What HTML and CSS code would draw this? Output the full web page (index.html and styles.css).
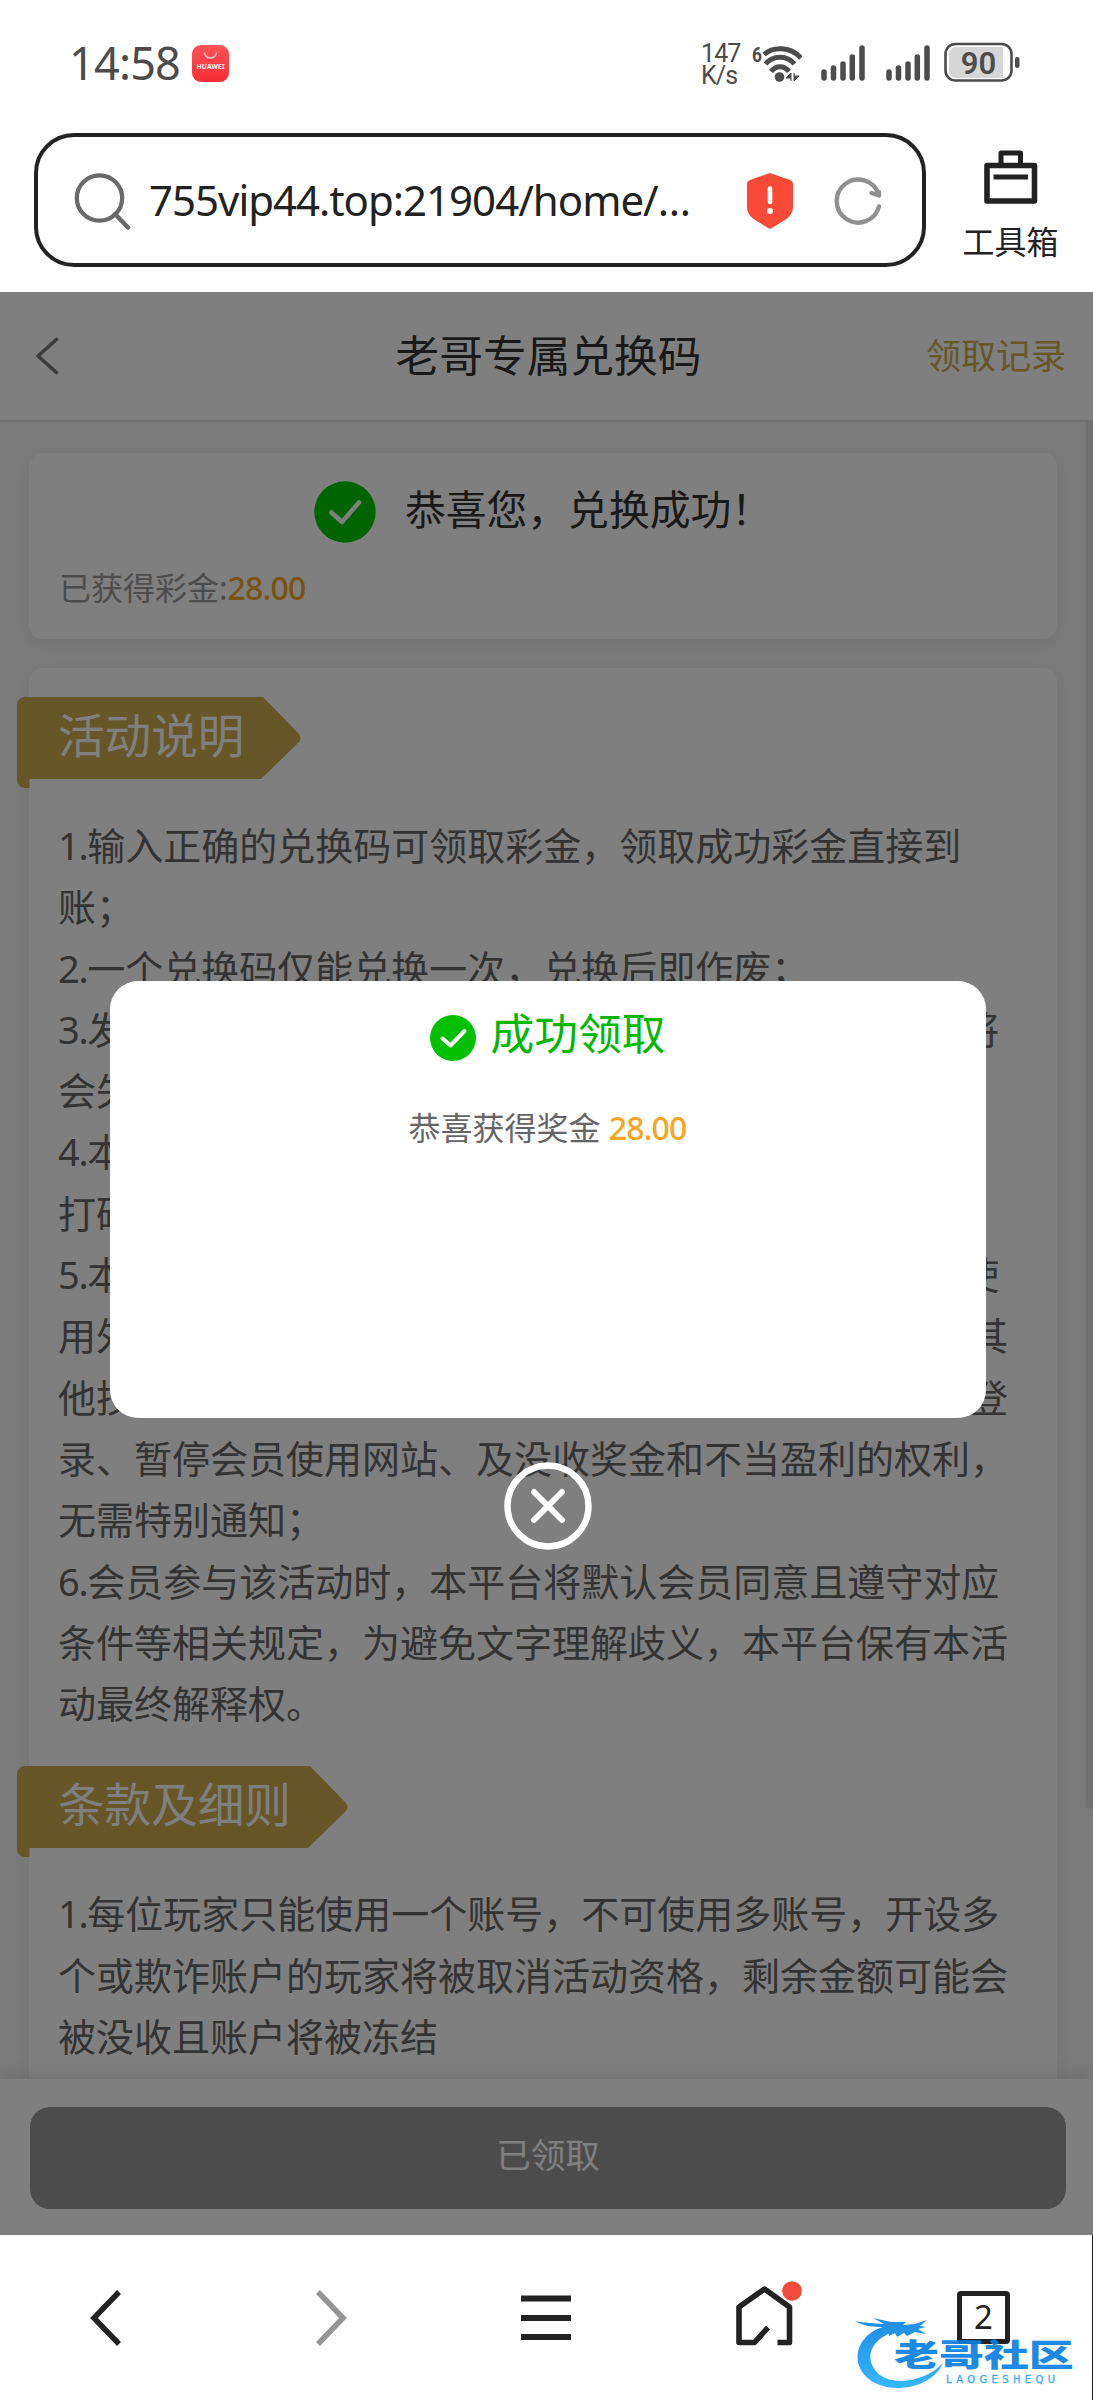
FILE: index.html
```
<!DOCTYPE html>
<html lang="zh-CN">
<head>
<meta charset="utf-8">
<title>老哥专属兑换码</title>
<link rel="stylesheet" href="styles.css">
</head>
<body>
<div class="phone">
  <div class="status">
    <span class="clock">14:58</span>
    <svg class="app" width="37" height="37" viewBox="0 0 37 37"><defs><linearGradient id="hw" x2="0" y2="1"><stop offset="0" stop-color="#ff5357"/><stop offset="1" stop-color="#f92c35"/></linearGradient></defs><rect width="37" height="37" rx="9" fill="url(#hw)"/><path d="M12.5 7.5a6 5.5 0 0 0 12 0" fill="none" stroke="#ffc9c9" stroke-width="1.4"/><text x="18.5" y="24" text-anchor="middle" textLength="28" class="app-name">HUAWEI</text></svg>
    <span class="speed"><span>147</span><span>K/s</span></span>
    <svg class="wifi" width="50" height="38" viewBox="0 0 50 38"><text x="0" y="18" class="wifi-gen" textLength="10" lengthAdjust="spacingAndGlyphs">6</text><g fill="none" stroke="#4c4c4c" stroke-width="5"><path d="M12 10.500C21 2.500 38 2 49 14" /><path d="M13.500 20C21 11 35 11 42.500 20"/><path d="M19 27.500C24 21 32 21 37 27.500"/></g><circle cx="27.500" cy="33" r="4.800" fill="#4c4c4c"/><path d="M39 37V29L34 34h4M42 29v8l5-5h-4" fill="#4c4c4c" stroke="#4c4c4c" stroke-width="1"/></svg>
    <svg class="signal" width="44" height="36" viewBox="0 0 44 36"><path d="M3 27v6M12.500 23v10M22 19v14M31.300 12v21M41 3v30" stroke="#4c4c4c" stroke-width="5.500" stroke-linecap="round"/></svg>
    <svg class="signal second" width="44" height="36" viewBox="0 0 44 36"><path d="M3 27v6M12.500 23v10M22 19v14M31.300 12v21M41 3v30" stroke="#4c4c4c" stroke-width="5.500" stroke-linecap="round"/></svg>
    <svg class="battery" width="76" height="40" viewBox="0 0 76 40"><rect x="1.500" y="2" width="66" height="36.500" rx="10" fill="#fff" stroke="#4c4c4c" stroke-width="2.600"/><path d="M12 5H59V36H12a7 7 0 0 1-7-7V12a7 7 0 0 1 7-7Z" fill="#d6d6d6"/><rect x="71" y="15" width="4.500" height="11" rx="2" fill="#4c4c4c"/><text x="34.500" y="31.500" text-anchor="middle" class="level">90</text></svg>
  </div>

  <div class="toolbar">
    <div class="address">
      <svg class="search" width="58" height="60" viewBox="0 0 58 60"><circle cx="26.500" cy="27" r="22.700" fill="none" stroke="#6a6a6a" stroke-width="4.300"/><path d="M42 43 55 56.500" stroke="#6a6a6a" stroke-width="4.500" stroke-linecap="round"/></svg>
      <span class="url">755vip44.top:21904/home/…</span>
      <svg class="shield" width="48" height="58" viewBox="0 0 48 58"><path d="M24 1 44 8q3 1 3 4V35q0 7-6 11.500Q36 50 24 57 12 50 7 46.500 1 42 1 35V12q0-3 3-4Z" fill="#f84a37"/><path d="M24 16.500V30" stroke="#fff" stroke-width="4.600" stroke-linecap="round"/><circle cx="24" cy="39" r="3" fill="#fff"/></svg>
      <svg class="reload" width="52" height="52" viewBox="0 0 52 52"><g fill="none" stroke="#909090" stroke-width="4.400" stroke-linecap="round" stroke-linejoin="round"><path d="M47 31.500A21.500 21.500 0 1 1 46.500 19"/><path d="M39.500 18 47 20.500V17"/></g></svg>
    </div>
    <div class="tools">
      <svg width="54" height="54" viewBox="0 0 54 54"><g fill="none" stroke="#222" stroke-linejoin="round"><rect x="3" y="15.500" width="47.500" height="35.500" stroke-width="5.600"/><path d="M17 15V3H36.500V15" stroke-width="5"/><path d="M9.500 27H44" stroke-width="5"/></g></svg>
      <span>工具箱</span>
    </div>
  </div>

  <div class="webview">
    <header class="head">
      <svg width="26" height="38" viewBox="0 0 26 38"><path d="M22.500 2.500 4 19 22.500 35.500" fill="none" stroke="#777" stroke-width="3.600" stroke-linecap="round" stroke-linejoin="round"/></svg>
      <h1>老哥专属兑换码</h1>
      <a>领取记录</a>
    </header>
    <main class="content">
      <section class="card result">
        <div class="result-title">
          <svg width="62" height="62" viewBox="0 0 62 62"><circle cx="31" cy="31" r="30.700" fill="#00ca00"/><path d="M17.500 31.500 28 41 45 21.500" fill="none" stroke="#fff" stroke-width="4.500" stroke-linecap="round" stroke-linejoin="round"/></svg>
          <span>恭喜您，兑换成功！</span>
        </div>
        <p>已获得彩金:<b class="amount">28.00</b></p>
      </section>
      <section class="card rules">
        <h2 class="ribbon"><svg class="flag" width="284" height="91" viewBox="0 0 284 91"><path d="M8 0H246L282 37q3 4 0 8L244 82H12.500V91H8a8 8 0 0 1-8-8V8A8 8 0 0 1 8 0Z" fill="#ceac50"/></svg><span>活动说明</span></h2>
        <p class="copy"><i>1.</i>输入正确的兑换码可领取彩金，领取成功彩金直接到<br>账；<br><i>2.</i>一个兑换码仅能兑换一次，兑换后即作废；<br><i>3.</i>发布的兑换码请在有效时间内尽快兑换使用，逾期后将<br>会失去兑换资格；<br><i>4.</i>本活动所获得的彩金需完成相应流水，方可申请提款、<br>打码要求以平台公布为准；<br><i>5.</i>本活动仅限真实会员参与，如本平台发现有任何会员使<br>用外挂程序、机器人、恶意套利、多账号操作以及借助其<br>他技术手段的违规行为，本平台保留无需说明即时拒绝登<br>录、暂停会员使用网站、及没收奖金和不当盈利的权利，<br>无需特别通知；<br><i>6.</i>会员参与该活动时，本平台将默认会员同意且遵守对应<br>条件等相关规定，为避免文字理解歧义，本平台保有本活<br>动最终解释权。</p>
        <h2 class="ribbon terms"><svg class="flag" width="331" height="91" viewBox="0 0 331 91"><path d="M8 0H293L329 37q3 4 0 8L291 82H12.500V91H8a8 8 0 0 1-8-8V8A8 8 0 0 1 8 0Z" fill="#ceac50"/></svg><span>条款及细则</span></h2>
        <p class="copy"><i>1.</i>每位玩家只能使用一个账号，不可使用多账号，开设多<br>个或欺诈账户的玩家将被取消活动资格，剩余金额可能会<br>被没收且账户将被冻结</p>
      </section>
      <div class="scrollbar"></div>
    </main>
    <footer class="action"><button>已领取</button></footer>

    <div class="overlay">
      <div class="modal">
        <div class="modal-title">
          <svg width="46" height="46" viewBox="0 0 46 46"><circle cx="23" cy="23" r="23" fill="#00c000"/><path d="M12.500 23.500 20.500 30.500 34.500 16" fill="none" stroke="#fff" stroke-width="4" stroke-linecap="round" stroke-linejoin="round"/></svg>
          <span>成功领取</span>
        </div>
        <p>恭喜获得奖金 <b class="amount">28.00</b></p>
      </div>
      <svg class="close" width="88" height="88" viewBox="0 0 88 88"><circle cx="44" cy="44" r="40.500" fill="none" stroke="#fff" stroke-width="6.500"/><path d="M30 30 58 58M58 30 30 58" stroke="#fff" stroke-width="6" stroke-linecap="round"/></svg>
    </div>
  </div>

  <nav class="nav">
    <svg class="n-back" width="34" height="58" viewBox="0 0 34 58"><path d="M30 3 5 29 30 55" fill="none" stroke="#222" stroke-width="5.500"/></svg>
    <svg class="n-fwd" width="34" height="58" viewBox="0 0 34 58"><path d="M4 3 29 29 4 55" fill="none" stroke="#959595" stroke-width="5.500"/></svg>
    <svg class="n-menu" width="50" height="46" viewBox="0 0 50 46"><path d="M0 3.500H50M0 23H50M0 42H50" stroke="#222" stroke-width="6"/></svg>
    <svg class="n-home" width="68" height="68" viewBox="0 0 68 68"><path d="M41.500 62.500H53.500V27L28.500 9 3 27V62.500H18.500L32 47.500" transform="translate(0 1)" fill="none" stroke="#222" stroke-width="5.600" stroke-linejoin="round"/><circle cx="56" cy="12" r="9.800" fill="#f24a3a"/></svg>
    <div class="tabs">2</div>
    <svg class="brand" width="224" height="76" viewBox="0 0 224 76">
      <defs><linearGradient id="sea" gradientUnits="userSpaceOnUse" x1="0" y1="0" x2="0" y2="76"><stop offset="0" stop-color="#0b80e0"/><stop offset="1" stop-color="#27b4ff"/></linearGradient></defs>
      <g fill="url(#sea)">
        <path d="M36 10C8 14-4 38 6 55 20 81 74 79 88 48 72 66 34 74 20 55 8 39 20 20 46 15Z"/>
        <path d="M0 6C10 8 18 8 29 9L18 3 36 7 51 7 48 10 60 9 72 5 65 11 71 12 63 14 71 19 60 17 52 21 49 18 42 22 40 18 34 21 33 16 25 18 29 12C18 12 8 11 0 6Z"/>
        <text transform="translate(39 51) scale(1.450 1)" class="brand-name">老哥社区</text>
        <text x="91" y="68" textLength="109" class="brand-latin">LAOGESHEQU</text>
      </g>
    </svg>
  </nav>
</div>
</body>
</html>
```
FILE: styles.css
```
* { box-sizing: border-box; }
body { margin: 0; background: #fff; font-family: "Noto Sans", "Noto Sans CJK SC", sans-serif; }
h1, h2, p { margin: 0; font-weight: 400; }
svg { display: block; flex: none; }
i, b { font-style: normal; font-weight: 400; }
.phone { width: 1093px; height: 2400px; display: flex; flex-direction: column; overflow: hidden; background: #fff; }

/* status bar */
.status { height: 127px; display: flex; align-items: flex-start; padding: 43px 0 0 69px; color: #4c4c4c; }
.clock { width: 123px; height: 40px; line-height: 40px; font-size: 45px; font-weight: 400; letter-spacing: -.8px; white-space: nowrap; }
.app { margin-top: 2px; }
.app-name { font: 700 6.5px "Noto Sans", sans-serif; fill: #fff; }
.speed { display: flex; flex-direction: column; width: 50px; margin-left: 472px; font: 25px/22px Roboto, sans-serif; letter-spacing: -.9px; }
.wifi { margin: 1px 0 0 1px; }
.wifi-gen { font: 700 21px Roboto, sans-serif; fill: #4c4c4c; }
.signal { margin: 2px 0 0 19px; }
.second { margin-left: 21px; }
.battery { margin: -1px 0 0 14px; }
.level { font: 600 31px Roboto, sans-serif; fill: #4c4c4c; }

/* address bar */
.toolbar { height: 165px; display: flex; padding: 6px 0 0 34px; }
.address { width: 892px; height: 134px; border: 4px solid #222; border-radius: 40px; display: flex; align-items: center; }
.search { margin: 2px 0 0 35px; }
.url { width: 597px; margin-left: 18px; font-size: 42px; line-height: 60px; letter-spacing: -1px; color: #222; white-space: nowrap; }
.shield { margin-top: 2px; }
.reload { margin: 2px 0 0 38px; }
.tools { width: 167px; padding-top: 17px; display: flex; flex-direction: column; align-items: center; }
.tools svg { margin-left: 2px; }
.tools span { margin: 12px 0 0 2px; font: 32px/48px "Noto Sans CJK SC", sans-serif; color: #222; }

/* page */
.webview { position: relative; height: 1943px; display: flex; flex-direction: column; background: #f5f5f5; overflow: hidden; }
.head { height: 130px; flex: none; display: flex; align-items: center; justify-content: space-between; padding: 0 27px 0 34px; background: #fff; border-bottom: 2px solid #dedede; font-family: "Noto Sans CJK SC", sans-serif; }
.head h1 { font-size: 43.700px; line-height: 60px; color: #333; margin-left: 111px; margin-top: -7px; }
.head a { font-size: 35px; line-height: 50px; color: #ceac50; margin-top: -5px; }
.content { position: relative; height: 1657px; flex: none; padding: 31px 36px 0 29px; display: flex; flex-direction: column; gap: 29px; overflow: hidden; }
.card { background: #fff; border-radius: 14px; box-shadow: 0 4px 18px rgba(0,0,0,.06); }
.result { height: 186px; flex: none; padding: 28px 30px 0; }
.result-title { display: flex; justify-content: center; gap: 29px; height: 62px; align-items: center; }
.result-title span { font: 40.800px/60px "Noto Sans CJK SC", sans-serif; color: #333; margin-top: -9px; white-space: nowrap; }
.result p { font-size: 32px; line-height: 48px; color: #999; margin-top: 21px; }
.amount { color: #f5a623; font-weight: 500; letter-spacing: -.8px; }
.rules { height: 1500px; flex: none; padding: 29px 0 0; }
.ribbon { display: grid; width: max-content; height: 91px; margin-left: -12px; }
.ribbon > * { grid-area: 1 / 1; }
.ribbon span { padding: 0 0 0 41px; font: 46.6px/72px "Noto Sans CJK SC", sans-serif; color: #fff; }
.copy { margin: 25px 0 0 29px; font: 38px/61.3px "Noto Sans CJK SC", sans-serif; color: #666; white-space: nowrap; }
.copy i { font-family: "Noto Sans", sans-serif; letter-spacing: -1.300px; line-height: 1; }
.terms { margin-top: 34px; }
.terms + .copy { margin-top: 24px; }
.scrollbar { position: absolute; right: 0; top: 0; width: 7px; height: 1387px; border-radius: 4px; background: #dedede; }
.action { position: relative; height: 156px; flex: none; padding: 28px 27px 0 30px; background: #fff; box-shadow: 0 -4px 16px rgba(0,0,0,.1); }
.action button { display: block; width: 100%; height: 102px; border: 0; border-radius: 20px; background: #989898; color: #fff; font: 34.600px/50px "Noto Sans CJK SC", sans-serif; padding: 0 0 10px; }

/* reward dialog */
.overlay { position: absolute; inset: 0; padding-top: 689px; display: flex; flex-direction: column; align-items: center; background: rgba(0,0,0,.5); }
.modal { width: 876px; height: 437px; flex: none; margin-left: 2px; padding-top: 34px; border-radius: 28px; background: #fff; text-align: center; }
.modal-title { display: flex; align-items: center; justify-content: center; gap: 15px; height: 46px; }
.modal-title span { font: 43.700px/60px "Noto Sans CJK SC", sans-serif; color: #00b800; margin-top: -15px; }
.modal p { margin-top: 43px; font-size: 32px; line-height: 48px; color: #666; }
.close { margin: 44px 0 0 2px; }

/* browser navigation */
.nav { position: relative; height: 165px; display: flex; align-items: flex-start; border-right: 1px solid #222; }
.n-back { margin: 54px 0 0 89px; }
.n-fwd { margin: 54px 0 0 191px; }
.n-menu { margin: 60px 0 0 173px; }
.n-home { margin: 44px 0 0 165px; }
.tabs { width: 53px; height: 53px; margin: 56px 0 0 153px; border: 5.500px solid #222; border-radius: 4px; font-size: 33px; line-height: 42px; text-align: center; color: #222; }
.brand { position: absolute; left: 855px; top: 80px; opacity: .92; }
.brand-name { font: 900 31px "Noto Sans CJK SC", sans-serif; }
.brand-latin { font: 400 10px "DejaVu Sans", sans-serif; stroke: #2a9bea; stroke-width: .3; }
```
